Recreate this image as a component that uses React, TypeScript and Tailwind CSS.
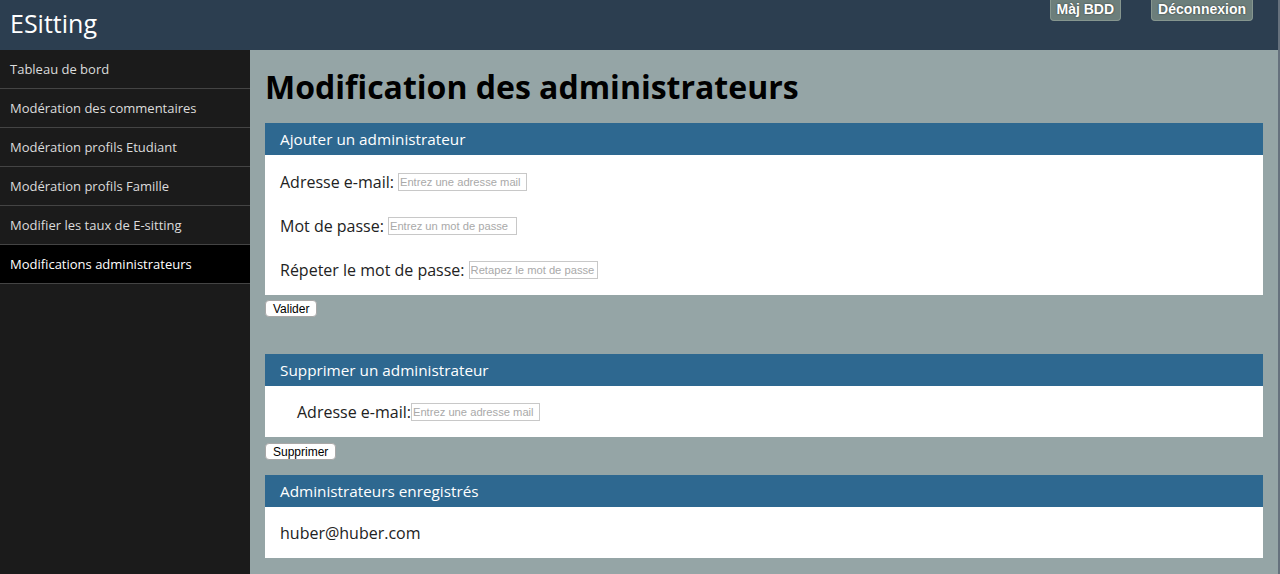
import React from "react";

const open = { fontFamily: '"Open Sans", "Noto Sans", sans-serif' };
const arial = { fontFamily: '"Liberation Sans", Arial, sans-serif' };

const navItems = [
  "Tableau de bord",
  "Modération des commentaires",
  "Modération profils Etudiant",
  "Modération profils Famille",
  "Modifier les taux de E-sitting",
  "Modifications administrateurs",
];

function SectionHeader({ title }: { title: string }) {
  return (
    <div className="h-[32px] bg-[#2e6890] flex items-center pl-[15px] text-white text-[15.3px]" style={open}>
      {title}
    </div>
  );
}

function Input({ placeholder, w = 129 }: { placeholder: string; w?: number }) {
  return (
    <input
      placeholder={placeholder}
      className="h-[18px] border border-[#c8c8c8] bg-white px-[1px] text-[11.2px] placeholder:text-[#a9a9a9] outline-none"
      style={{ ...arial, width: w }}
    />
  );
}

function Btn({ label }: { label: string }) {
  return (
    <button
      className="block h-[17px] px-[7px] bg-white border border-[#a8a8a8] rounded-[4px] text-[12px] leading-none text-black"
      style={arial}
    >
      {label}
    </button>
  );
}

export default function App() {
  return (
    <div className="h-[574px] w-[1280px] overflow-hidden flex">
      <div className="flex-1 flex flex-col">
        <header className="h-[50px] bg-[#2c3e50] flex items-start justify-between shrink-0">
          <div className="pl-[10px] pt-[6px] text-white text-[25px] leading-[34px]" style={open}>
            ESitting
          </div>
          <div className="flex gap-[30px] mr-[25px]">
            {["Màj BDD", "Déconnexion"].map((b) => (
              <div
                key={b}
                className="h-[21px] px-[6px] bg-[#6c7e7b] border border-t-0 border-[#86968f] rounded-b-[4px] text-white font-bold text-[14px] leading-[18px] [text-shadow:0_0_2px_rgba(0,0,0,0.6)]"
                style={arial}
              >
                {b}
              </div>
            ))}
          </div>
        </header>
        <div className="flex flex-1 min-h-0">
          <nav className="w-[250px] bg-[#1b1b1b] shrink-0" style={open}>
            {navItems.map((n, i) => (
              <div
                key={n}
                className={`h-[39px] border-b border-[#444] flex items-center pl-[10px] pt-[2px] text-[13px] ${
                  i === navItems.length - 1 ? "bg-black text-white" : "text-[#dcdcdc]"
                }`}
              >
                {n}
              </div>
            ))}
          </nav>
          <main className="flex-1 bg-[#95a5a6] px-[15px] pt-[17px]" style={open}>
            <h1 className="text-[32px] leading-[40px] font-bold text-black mb-[16px]">
              Modification des administrateurs
            </h1>

            <SectionHeader title="Ajouter un administrateur" />
            <div className="bg-white pl-[15px] pt-[13px] pb-[11px] flex flex-col gap-[16px] text-[16px] text-[#222]">
              <div className="h-[28px] flex items-center gap-[4px]">
                <span>Adresse e-mail:</span>
                <Input placeholder="Entrez une adresse mail" />
              </div>
              <div className="h-[28px] flex items-center gap-[4px]">
                <span>Mot de passe:</span>
                <Input placeholder="Entrez un mot de passe" />
              </div>
              <div className="h-[28px] flex items-center gap-[4px]">
                <span>Répeter le mot de passe:</span>
                <Input placeholder="Retapez le mot de passe" />
              </div>
            </div>
            <div className="pt-[5px] h-[59px]">
              <Btn label="Valider" />
            </div>

            <SectionHeader title="Supprimer un administrateur" />
            <div className="bg-white h-[51px] pl-[32px] flex items-center text-[16px] text-[#222]">
              <span>Adresse e-mail:</span>
              <Input placeholder="Entrez une adresse mail" />
            </div>
            <div className="pt-[6px] h-[38px]">
              <Btn label="Supprimer" />
            </div>

            <SectionHeader title="Administrateurs enregistrés" />
            <div className="bg-white h-[51px] pl-[15px] flex items-center text-[16px] text-[#222]">
              huber@huber.com
            </div>
          </main>
        </div>
      </div>
      <div className="w-[2px] bg-[#66717d] shrink-0" />
    </div>
  );
}
